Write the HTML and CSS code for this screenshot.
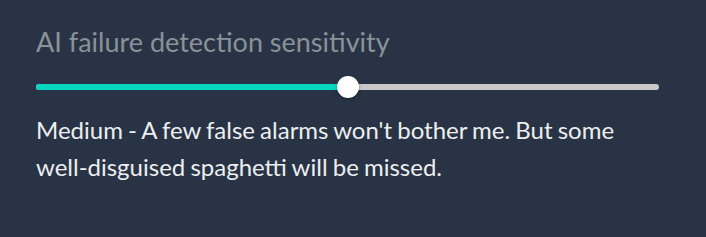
FILE: index.html
```html
<!DOCTYPE html>
<html>
  <head>
    <title>Sensitivity</title>
    <link rel="stylesheet" href="styles.css">
  </head>
  <body>
    <div class="setting">
      <h2 class="setting-title">AI failure detection sensitivity</h2>
      <div class="slider">
        <div class="slider-track">
          <div class="slider-fill" style="width: 50%"></div>
          <div class="slider-thumb" style="left: 50%"></div>
        </div>
      </div>
      <p class="setting-help">Medium - A few false alarms won't bother me. But some well-disguised spaghetti will be missed.</p>
    </div>
  </body>
</html>
```

FILE: styles.css
```css
body {
  margin: 0;
  background-color: #283445;
  font-family: Lato, "Open Sans", sans-serif;
}
.setting {
  width: 623px;
  padding: 25px 36px 0 36px;
}
.setting-title {
  margin: 0;
  font-size: 27px;
  font-weight: normal;
  color: #8b9199;
  line-height: 34px;
}
.slider {
  padding: 25px 0 21px 0;
}
.slider-track {
  position: relative;
  height: 6px;
  border-radius: 3px;
  background-color: #c8c8c8;
}
.slider-fill {
  height: 100%;
  border-radius: 3px;
  background-color: #06d6c0;
}
.slider-thumb {
  position: absolute;
  top: 50%;
  width: 22px;
  height: 22px;
  margin: -11px 0 0 -11px;
  border-radius: 50%;
  background-color: #fff;
  box-shadow: 0 1px 3px rgba(0, 0, 0, 0.4);
}
.setting-help {
  margin: 0;
  font-size: 24px;
  line-height: 37px;
  word-spacing: -1px;
  color: #eceeef;
}
```
